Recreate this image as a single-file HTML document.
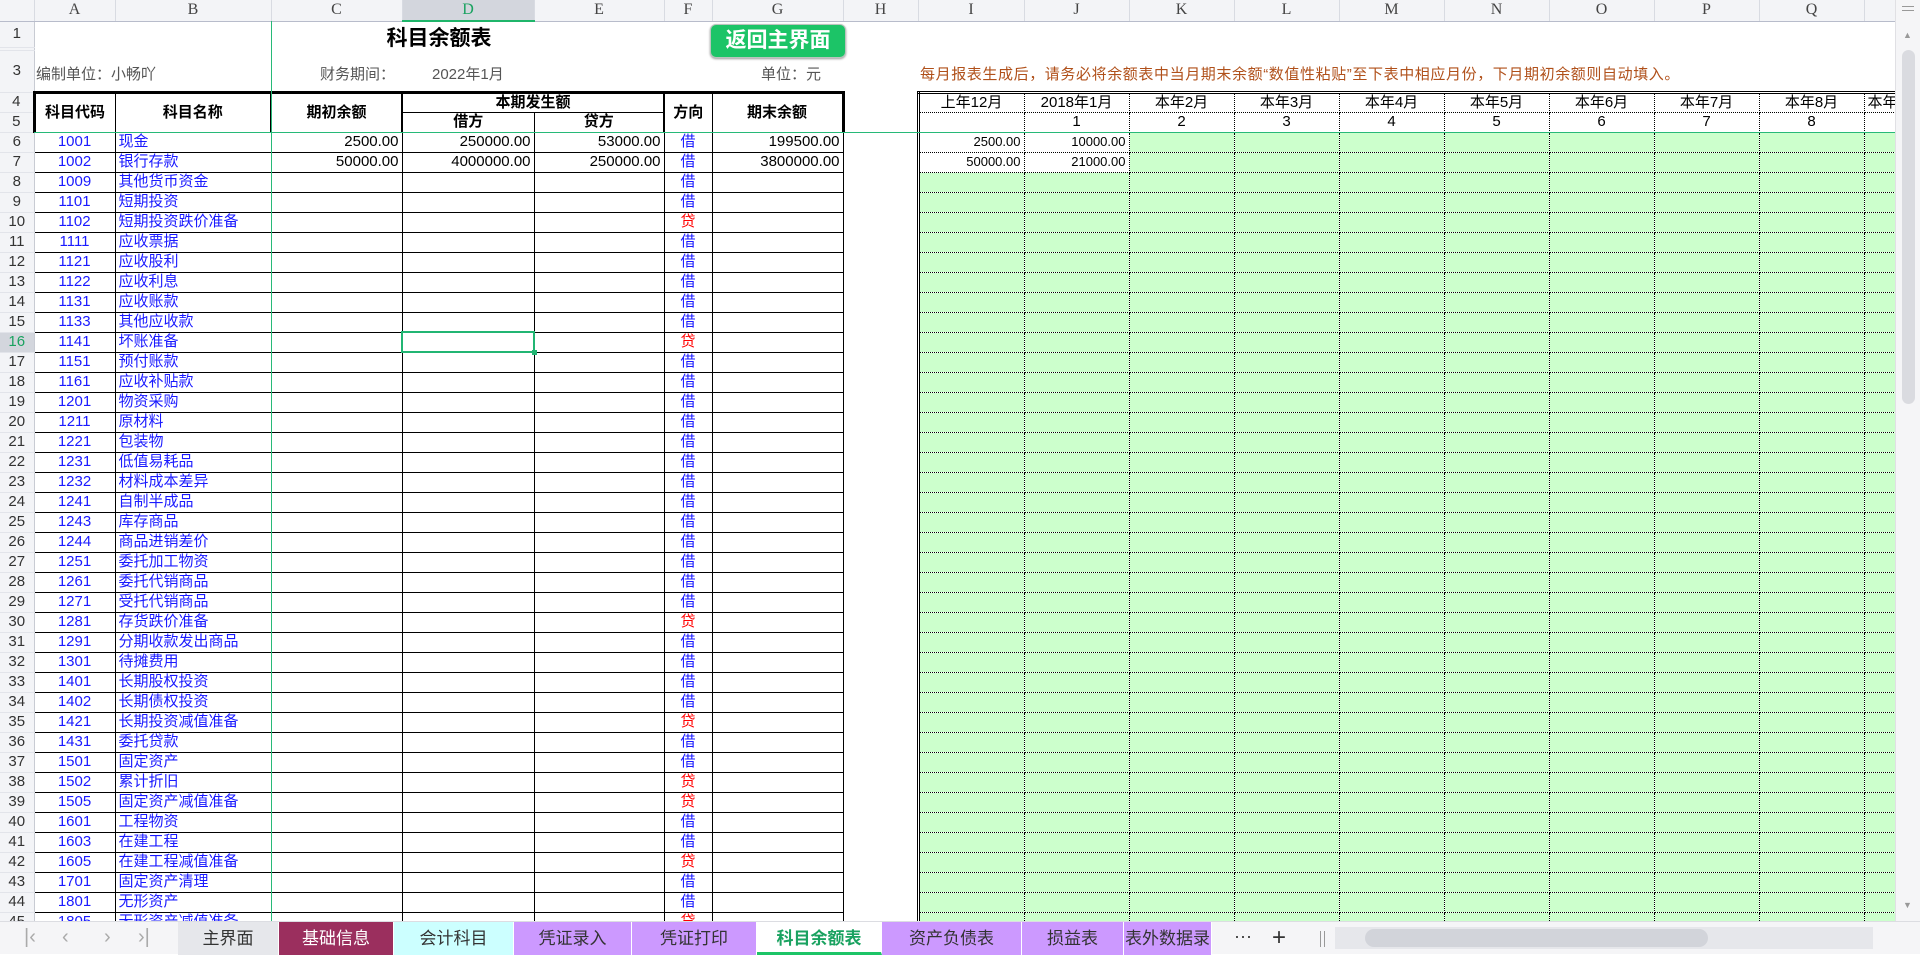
<!DOCTYPE html>
<html><head><meta charset="utf-8"><style>
*{margin:0;padding:0;box-sizing:border-box}
body{width:1920px;height:954px;overflow:hidden;background:#fff;font-family:"Liberation Sans","Noto Sans CJK SC",sans-serif;position:relative}
#w{position:absolute;left:0;top:0;width:1895px;height:921px;overflow:hidden}
table{position:absolute;left:0;top:0;border-collapse:collapse;table-layout:fixed;font-size:15px;width:1969px}
td{padding:0 3px;white-space:nowrap;overflow:hidden;line-height:18px}
tr.h td{height:21px;background:#f3f4f7;color:#444;text-align:center;font-family:"Liberation Serif",serif;font-size:16px;border-right:1px solid #d8dbe2;border-bottom:1px solid #b8bccb}
tr.h td.sel{background:#d3d6dd;color:#1aa260;border-bottom:2px solid #1fb56a}
td.rh{background:#f3f4f7;color:#333;text-align:center;font-size:15px;border-right:1px solid #c8cbd3;border-bottom:1px solid #e2e4ea;padding:0}
tr.d td{height:20px}
tr.d td:nth-child(n+2):nth-child(-n+8){border:1px solid #000}
tr.d td:nth-child(2){border-left:3px solid #000;text-align:center;color:#1a1aff}
tr.d td:nth-child(3){color:#1a1aff;border-right:2px solid #000}
tr.d td:nth-child(4),tr.d td:nth-child(5),tr.d td:nth-child(6),tr.d td:nth-child(8){text-align:right}
tr.d td:nth-child(4){border-right:2px solid #000}
tr.d td:nth-child(6){border-right:2px solid #000}
tr.d td:nth-child(7){text-align:center;color:#1a1aff}
tr.d td:nth-child(8){border-right:3px solid #000}
tr.d td:nth-child(n+10){border:1px dotted #000;background:#ccffcc;text-align:right;font-size:13px}
tr.d td:nth-child(10){border-left:3px double #000}
td.w{background:#fff!important}
td.c{color:#f00!important}
td.hb{border:1px solid #000;font-weight:bold;text-align:center;font-size:15px}
td.t3{border-top:3px solid #000}
td.tl{border-left:3px solid #000}
td.tr{border-right:3px solid #000}
td.r2{border-right:2px solid #000}
td.l2{border-left:2px solid #000}
td.dt{border:1px dotted #000;text-align:center;font-size:15px}
td.dl{border-left:3px double #000}
td.tt{border-top:3px double #000}
#sel{position:absolute;left:401px;top:331px;width:134px;height:22px;border:2px solid #21b573}
#sel:after{content:"";position:absolute;right:-4px;bottom:-4px;width:5px;height:5px;background:#21b573}
.gl{position:absolute;background:#27b978}
.tx{position:absolute;font-size:15px;color:#555;white-space:nowrap}
#tabs{position:absolute;left:0;top:921px;width:1920px;height:33px;background:#f5f5f7;border-top:1px solid #dcdde2}
.tab{position:absolute;top:0;height:33px;line-height:33px;text-align:center;font-size:17px;color:#333;border-right:1px solid #fff}
.nv{position:absolute;top:4px;font-size:20px;color:#aaa}
</style></head><body>
<div id="w">
<table>
<colgroup><col style="width:34px"><col style="width:81px"><col style="width:156px"><col style="width:131px"><col style="width:132px"><col style="width:130px"><col style="width:48px"><col style="width:131px"><col style="width:75px"><col style="width:106px"><col style="width:105px"><col style="width:105px"><col style="width:105px"><col style="width:105px"><col style="width:105px"><col style="width:105px"><col style="width:105px"><col style="width:105px"><col style="width:105px"></colgroup>
<tr class="h"><td></td><td>A</td><td>B</td><td>C</td><td class="sel">D</td><td>E</td><td>F</td><td>G</td><td>H</td><td>I</td><td>J</td><td>K</td><td>L</td><td>M</td><td>N</td><td>O</td><td>P</td><td>Q</td><td>R</td></tr>
<tr style="height:26px"><td class="rh">1</td><td colspan="18"></td></tr>
<tr style="height:3px"><td class="rh" style="font-size:2px"></td><td colspan="18"></td></tr>
<tr style="height:42px"><td class="rh">3</td><td colspan="18"></td></tr>
<tr style="height:20px"><td class="rh">4</td><td rowspan="2" class="hb t3 tl">科目代码</td><td rowspan="2" class="hb t3 r2">科目名称</td><td rowspan="2" class="hb t3 r2">期初余额</td><td colspan="2" class="hb t3 r2">本期发生额</td><td rowspan="2" class="hb t3">方向</td><td rowspan="2" class="hb t3 tr">期末余额</td><td></td><td class="dt dl tt">上年12月</td><td class="dt tt">2018年1月</td><td class="dt tt">本年2月</td><td class="dt tt">本年3月</td><td class="dt tt">本年4月</td><td class="dt tt">本年5月</td><td class="dt tt">本年6月</td><td class="dt tt">本年7月</td><td class="dt tt">本年8月</td><td class="dt tt" style="text-align:left">本年9月</td></tr>
<tr style="height:20px"><td class="rh">5</td><td class="hb">借方</td><td class="hb r2">贷方</td><td></td><td class="dt dl"></td><td class="dt">1</td><td class="dt">2</td><td class="dt">3</td><td class="dt">4</td><td class="dt">5</td><td class="dt">6</td><td class="dt">7</td><td class="dt">8</td><td class="dt">9</td></tr>
<tr class="d"><td class="rh">6</td><td>1001</td><td>现金</td><td>2500.00</td><td>250000.00</td><td>53000.00</td><td>借</td><td>199500.00</td><td></td><td class="w">2500.00</td><td class="w">10000.00</td><td></td><td></td><td></td><td></td><td></td><td></td><td></td><td></td></tr>
<tr class="d"><td class="rh">7</td><td>1002</td><td>银行存款</td><td>50000.00</td><td>4000000.00</td><td>250000.00</td><td>借</td><td>3800000.00</td><td></td><td class="w">50000.00</td><td class="w">21000.00</td><td></td><td></td><td></td><td></td><td></td><td></td><td></td><td></td></tr>
<tr class="d"><td class="rh">8</td><td>1009</td><td>其他货币资金</td><td></td><td></td><td></td><td>借</td><td></td><td></td><td></td><td></td><td></td><td></td><td></td><td></td><td></td><td></td><td></td><td></td></tr>
<tr class="d"><td class="rh">9</td><td>1101</td><td>短期投资</td><td></td><td></td><td></td><td>借</td><td></td><td></td><td></td><td></td><td></td><td></td><td></td><td></td><td></td><td></td><td></td><td></td></tr>
<tr class="d"><td class="rh">10</td><td>1102</td><td>短期投资跌价准备</td><td></td><td></td><td></td><td class="c">贷</td><td></td><td></td><td></td><td></td><td></td><td></td><td></td><td></td><td></td><td></td><td></td><td></td></tr>
<tr class="d"><td class="rh">11</td><td>1111</td><td>应收票据</td><td></td><td></td><td></td><td>借</td><td></td><td></td><td></td><td></td><td></td><td></td><td></td><td></td><td></td><td></td><td></td><td></td></tr>
<tr class="d"><td class="rh">12</td><td>1121</td><td>应收股利</td><td></td><td></td><td></td><td>借</td><td></td><td></td><td></td><td></td><td></td><td></td><td></td><td></td><td></td><td></td><td></td><td></td></tr>
<tr class="d"><td class="rh">13</td><td>1122</td><td>应收利息</td><td></td><td></td><td></td><td>借</td><td></td><td></td><td></td><td></td><td></td><td></td><td></td><td></td><td></td><td></td><td></td><td></td></tr>
<tr class="d"><td class="rh">14</td><td>1131</td><td>应收账款</td><td></td><td></td><td></td><td>借</td><td></td><td></td><td></td><td></td><td></td><td></td><td></td><td></td><td></td><td></td><td></td><td></td></tr>
<tr class="d"><td class="rh">15</td><td>1133</td><td>其他应收款</td><td></td><td></td><td></td><td>借</td><td></td><td></td><td></td><td></td><td></td><td></td><td></td><td></td><td></td><td></td><td></td><td></td></tr>
<tr class="d"><td class="rh" style="background:#d3d6dd;color:#1aa260">16</td><td>1141</td><td>坏账准备</td><td></td><td></td><td></td><td class="c">贷</td><td></td><td></td><td></td><td></td><td></td><td></td><td></td><td></td><td></td><td></td><td></td><td></td></tr>
<tr class="d"><td class="rh">17</td><td>1151</td><td>预付账款</td><td></td><td></td><td></td><td>借</td><td></td><td></td><td></td><td></td><td></td><td></td><td></td><td></td><td></td><td></td><td></td><td></td></tr>
<tr class="d"><td class="rh">18</td><td>1161</td><td>应收补贴款</td><td></td><td></td><td></td><td>借</td><td></td><td></td><td></td><td></td><td></td><td></td><td></td><td></td><td></td><td></td><td></td><td></td></tr>
<tr class="d"><td class="rh">19</td><td>1201</td><td>物资采购</td><td></td><td></td><td></td><td>借</td><td></td><td></td><td></td><td></td><td></td><td></td><td></td><td></td><td></td><td></td><td></td><td></td></tr>
<tr class="d"><td class="rh">20</td><td>1211</td><td>原材料</td><td></td><td></td><td></td><td>借</td><td></td><td></td><td></td><td></td><td></td><td></td><td></td><td></td><td></td><td></td><td></td><td></td></tr>
<tr class="d"><td class="rh">21</td><td>1221</td><td>包装物</td><td></td><td></td><td></td><td>借</td><td></td><td></td><td></td><td></td><td></td><td></td><td></td><td></td><td></td><td></td><td></td><td></td></tr>
<tr class="d"><td class="rh">22</td><td>1231</td><td>低值易耗品</td><td></td><td></td><td></td><td>借</td><td></td><td></td><td></td><td></td><td></td><td></td><td></td><td></td><td></td><td></td><td></td><td></td></tr>
<tr class="d"><td class="rh">23</td><td>1232</td><td>材料成本差异</td><td></td><td></td><td></td><td>借</td><td></td><td></td><td></td><td></td><td></td><td></td><td></td><td></td><td></td><td></td><td></td><td></td></tr>
<tr class="d"><td class="rh">24</td><td>1241</td><td>自制半成品</td><td></td><td></td><td></td><td>借</td><td></td><td></td><td></td><td></td><td></td><td></td><td></td><td></td><td></td><td></td><td></td><td></td></tr>
<tr class="d"><td class="rh">25</td><td>1243</td><td>库存商品</td><td></td><td></td><td></td><td>借</td><td></td><td></td><td></td><td></td><td></td><td></td><td></td><td></td><td></td><td></td><td></td><td></td></tr>
<tr class="d"><td class="rh">26</td><td>1244</td><td>商品进销差价</td><td></td><td></td><td></td><td>借</td><td></td><td></td><td></td><td></td><td></td><td></td><td></td><td></td><td></td><td></td><td></td><td></td></tr>
<tr class="d"><td class="rh">27</td><td>1251</td><td>委托加工物资</td><td></td><td></td><td></td><td>借</td><td></td><td></td><td></td><td></td><td></td><td></td><td></td><td></td><td></td><td></td><td></td><td></td></tr>
<tr class="d"><td class="rh">28</td><td>1261</td><td>委托代销商品</td><td></td><td></td><td></td><td>借</td><td></td><td></td><td></td><td></td><td></td><td></td><td></td><td></td><td></td><td></td><td></td><td></td></tr>
<tr class="d"><td class="rh">29</td><td>1271</td><td>受托代销商品</td><td></td><td></td><td></td><td>借</td><td></td><td></td><td></td><td></td><td></td><td></td><td></td><td></td><td></td><td></td><td></td><td></td></tr>
<tr class="d"><td class="rh">30</td><td>1281</td><td>存货跌价准备</td><td></td><td></td><td></td><td class="c">贷</td><td></td><td></td><td></td><td></td><td></td><td></td><td></td><td></td><td></td><td></td><td></td><td></td></tr>
<tr class="d"><td class="rh">31</td><td>1291</td><td>分期收款发出商品</td><td></td><td></td><td></td><td>借</td><td></td><td></td><td></td><td></td><td></td><td></td><td></td><td></td><td></td><td></td><td></td><td></td></tr>
<tr class="d"><td class="rh">32</td><td>1301</td><td>待摊费用</td><td></td><td></td><td></td><td>借</td><td></td><td></td><td></td><td></td><td></td><td></td><td></td><td></td><td></td><td></td><td></td><td></td></tr>
<tr class="d"><td class="rh">33</td><td>1401</td><td>长期股权投资</td><td></td><td></td><td></td><td>借</td><td></td><td></td><td></td><td></td><td></td><td></td><td></td><td></td><td></td><td></td><td></td><td></td></tr>
<tr class="d"><td class="rh">34</td><td>1402</td><td>长期债权投资</td><td></td><td></td><td></td><td>借</td><td></td><td></td><td></td><td></td><td></td><td></td><td></td><td></td><td></td><td></td><td></td><td></td></tr>
<tr class="d"><td class="rh">35</td><td>1421</td><td>长期投资减值准备</td><td></td><td></td><td></td><td class="c">贷</td><td></td><td></td><td></td><td></td><td></td><td></td><td></td><td></td><td></td><td></td><td></td><td></td></tr>
<tr class="d"><td class="rh">36</td><td>1431</td><td>委托贷款</td><td></td><td></td><td></td><td>借</td><td></td><td></td><td></td><td></td><td></td><td></td><td></td><td></td><td></td><td></td><td></td><td></td></tr>
<tr class="d"><td class="rh">37</td><td>1501</td><td>固定资产</td><td></td><td></td><td></td><td>借</td><td></td><td></td><td></td><td></td><td></td><td></td><td></td><td></td><td></td><td></td><td></td><td></td></tr>
<tr class="d"><td class="rh">38</td><td>1502</td><td>累计折旧</td><td></td><td></td><td></td><td class="c">贷</td><td></td><td></td><td></td><td></td><td></td><td></td><td></td><td></td><td></td><td></td><td></td><td></td></tr>
<tr class="d"><td class="rh">39</td><td>1505</td><td>固定资产减值准备</td><td></td><td></td><td></td><td class="c">贷</td><td></td><td></td><td></td><td></td><td></td><td></td><td></td><td></td><td></td><td></td><td></td><td></td></tr>
<tr class="d"><td class="rh">40</td><td>1601</td><td>工程物资</td><td></td><td></td><td></td><td>借</td><td></td><td></td><td></td><td></td><td></td><td></td><td></td><td></td><td></td><td></td><td></td><td></td></tr>
<tr class="d"><td class="rh">41</td><td>1603</td><td>在建工程</td><td></td><td></td><td></td><td>借</td><td></td><td></td><td></td><td></td><td></td><td></td><td></td><td></td><td></td><td></td><td></td><td></td></tr>
<tr class="d"><td class="rh">42</td><td>1605</td><td>在建工程减值准备</td><td></td><td></td><td></td><td class="c">贷</td><td></td><td></td><td></td><td></td><td></td><td></td><td></td><td></td><td></td><td></td><td></td><td></td></tr>
<tr class="d"><td class="rh">43</td><td>1701</td><td>固定资产清理</td><td></td><td></td><td></td><td>借</td><td></td><td></td><td></td><td></td><td></td><td></td><td></td><td></td><td></td><td></td><td></td><td></td></tr>
<tr class="d"><td class="rh">44</td><td>1801</td><td>无形资产</td><td></td><td></td><td></td><td>借</td><td></td><td></td><td></td><td></td><td></td><td></td><td></td><td></td><td></td><td></td><td></td><td></td></tr>
<tr class="d"><td class="rh">45</td><td>1805</td><td>无形资产减值准备</td><td></td><td></td><td></td><td class="c">贷</td><td></td><td></td><td></td><td></td><td></td><td></td><td></td><td></td><td></td><td></td><td></td><td></td></tr>
</table>
<div id="sel"></div>
<div class="gl" style="left:271px;top:21px;width:1px;height:900px"></div>
<div class="gl" style="left:34px;top:132px;width:1861px;height:1px"></div>
<div style="position:absolute;left:300px;top:22px;width:278px;text-align:center;font-size:21px;font-weight:bold;color:#000">科目余额表</div>
<div style="position:absolute;left:710px;top:24px;width:136px;height:34px;background:#1cc467;border:1px solid #b9c4bd;border-radius:6px;color:#fff;font-size:21px;font-weight:bold;text-align:center;line-height:32px;box-shadow:0 1px 2px #999">返回主界面</div>
<div class="tx" style="left:36px;top:63px">编制单位：小畅吖</div>
<div class="tx" style="left:320px;top:63px">财务期间：</div>
<div class="tx" style="left:432px;top:63px">2022年1月</div>
<div class="tx" style="left:761px;top:63px">单位：元</div>
<div class="tx" style="left:920px;top:63px;color:#b0501a;letter-spacing:0.6px">每月报表生成后，请务必将余额表中当月期末余额“数值性粘贴”至下表中相应月份，下月期初余额则自动填入。</div>
</div>
<div style="position:absolute;left:1895px;top:0;width:25px;height:921px;background:#f5f5f7;border-left:1px solid #e0e0e4">
<div style="position:absolute;left:6px;top:6px;width:12px;height:1px;background:#999;box-shadow:0 4px 0 #999"></div>
<div style="position:absolute;left:7px;top:30px;font-size:9px;color:#999">▲</div>
<div style="position:absolute;left:6px;top:50px;width:13px;height:354px;background:#dadbe0;border-radius:7px"></div>
<div style="position:absolute;left:7px;top:900px;font-size:9px;color:#999">▼</div>
</div>
<div id="tabs">
<div class="nv" style="left:24px">|‹</div>
<div class="nv" style="left:62px">‹</div>
<div class="nv" style="left:104px">›</div>
<div class="nv" style="left:138px">›|</div>
<div class="tab" style="left:178px;width:101px;background:#e6e7eb">主界面</div>
<div class="tab" style="left:279px;width:115px;background:#9b2f5e;color:#fff">基础信息</div>
<div class="tab" style="left:394px;width:120px;background:#ccffff">会计科目</div>
<div class="tab" style="left:514px;width:118px;background:#cc99ff">凭证录入</div>
<div class="tab" style="left:632px;width:125px;background:#cc99ff">凭证打印</div>
<div class="tab" style="left:757px;width:125px;background:#fff;color:#1aa260;font-weight:bold;border-bottom:3px solid #1cc467">科目余额表</div>
<div class="tab" style="left:882px;width:140px;background:#cc99ff">资产负债表</div>
<div class="tab" style="left:1022px;width:102px;background:#cc99ff">损益表</div>
<div class="tab" style="left:1124px;width:88px;background:#cc99ff;overflow:hidden;white-space:nowrap">表外数据录</div>
<div style="position:absolute;left:1234px;top:4px;font-size:18px;color:#333">···</div>
<div style="position:absolute;left:1272px;top:2px;font-size:24px;color:#333">+</div>
<div style="position:absolute;left:1320px;top:9px;width:5px;height:16px;border-left:1px solid #999;border-right:1px solid #999"></div>
<div style="position:absolute;left:1335px;top:5px;width:538px;height:22px;background:#e6e7eb">
<div style="position:absolute;left:30px;top:2px;width:343px;height:18px;background:#d2d4da;border-radius:9px"></div></div>
</div>
</body></html>
